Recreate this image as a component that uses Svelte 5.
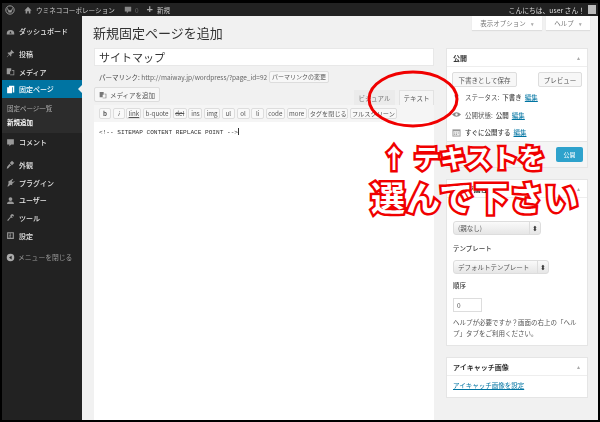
<script>
  const menuA = [['ダッシュボード', 'dash']];
  const menuB = [['投稿', 'pin'], ['メディア', 'media']];
  const menuC = [['外観', 'brush'], ['プラグイン', 'plug'], ['ユーザー', 'user'], ['ツール', 'tool'], ['設定', 'set']];
  const tools = [['b',12],['i',12],['link',15],['b-quote',28],['del',14],['ins',14],['img',16],['ul',13],['ol',13],['li',13],['code',19],['more',20],['タグを閉じる',40],['フルスクリーン',47]];
</script>

{#snippet icon(kind)}
  <svg class="ic" viewBox="0 0 12 12" aria-hidden="true">
    {#if kind === 'dash'}
      <path d="M1 9a5 5 0 0 1 10 0v1H1z M6 5.500 7.500 8.500H4.500z" fill-rule="evenodd" />
    {:else if kind === 'pin'}
      <path d="M7 1l4 4-1 .6-1-.4-2 2 .2 2L6.400 10 4.300 7.700 1.500 11 1 10.500 4 7.400 2 5.400l.8-.8 2 .2 2-2-.4-1z" />
    {:else if kind === 'media'}
      <path d="M1 1.500h6v4H5.500v4H1zM8 4h3v7H5.500v-1H10V5H8z" />
    {:else if kind === 'page'}
      <path d="M4 1h7v9H9V3H4zM1.500 3H8v8H1.500z" />
    {:else if kind === 'comment'}
      <path d="M1.500 1.500h9v7H7L4.500 11V8.500h-3z" />
    {:else if kind === 'brush'}
      <path d="M5 4l3-3 3 3-3 3zM4.500 5L7 7.500 5.500 8 3 11 1 11.500 1.500 9 4 6z" />
    {:else if kind === 'plug'}
      <path d="M6 3l3-2 .6.800L7.500 4 9 5.500 11 4l.5.700L8 8 8.500 9.500 6 9 2.500 11.500 2 11l1.500-4L3 4.500z" />
    {:else if kind === 'user'}
      <path d="M6 1.500a2.200 2.200 0 1 1 0 5 2.200 2.200 0 0 1 0-5zM1.500 10.500V9l2.500-1.800h4L10.500 9v1.500z" />
    {:else if kind === 'tool'}
      <path d="M7.500 1.500a3 3 0 0 1 3 3.500L9 3.800 7.800 5l1.300 1.400A3 3 0 0 1 6.400 6L2.800 10.800 1.500 9.500 5.800 5a3 3 0 0 1 1.700-3.500z" />
    {:else if kind === 'set'}
      <path d="M1.500 1.500h9v9h-9zM3 3v6h2V7H4V6h1V3zm3 0v2h1v1H6v3h3V3z" fill-rule="evenodd" />
    {:else if kind === 'close'}
      <path d="M6 1a5 5 0 1 1 0 10A5 5 0 0 1 6 1zM7.500 3.500 4 6l3.500 2.500z" fill-rule="evenodd" />
    {/if}
  </svg>
{/snippet}

<div class="frame">
  <header class="adminbar">
    <svg class="wp" viewBox="0 0 12 12"><circle cx="6" cy="6" r="5" fill="none" stroke="#9a9a9a" stroke-width="1.200"/><path d="M3 4l2 5 1-3 1 3 2-5" fill="none" stroke="#9a9a9a" stroke-width="1.200"/></svg>
    <svg class="home" viewBox="0 0 10 10"><path d="M5 1 9.500 5.500H8V9.500H6V6.500H4V9.500H2V5.500H.5z" fill="#999"/></svg>
    <span class="site">ウミネココーポレーション</span>
    <svg class="bub" viewBox="0 0 10 10"><path d="M1 1h8v6H5.500L3.500 9.500V7H1z" fill="#888"/></svg>
    <span class="count">0</span>
    <span class="plus">+</span>
    <span class="new">新規</span>
    <span class="hello">こんにちは、user さん！</span>
    <span class="avatar"></span>
  </header>

  <div class="body">
    <nav class="side">
      {#each menuA as m}<div class="mi first">{@render icon(m[1])}<span>{m[0]}</span></div>{/each}
      <div class="gap"></div>
      {#each menuB as m}<div class="mi">{@render icon(m[1])}<span>{m[0]}</span></div>{/each}
      <div class="mi active">{@render icon('page')}<span>固定ページ</span><i class="notch"></i></div>
      <div class="sub">
        <div class="s1">固定ページ一覧</div>
        <div class="s2">新規追加</div>
      </div>
      <div class="mi">{@render icon('comment')}<span>コメント</span></div>
      <div class="gap"></div>
      {#each menuC as m}<div class="mi">{@render icon(m[1])}<span>{m[0]}</span></div>{/each}
      <div class="mi close">{@render icon('close')}<span>メニューを閉じる</span></div>
    </nav>

    <main class="main">
      <div class="tabsTop">
        <span class="topTab t1">表示オプション <b>▾</b></span>
        <span class="topTab t2">ヘルプ <b>▾</b></span>
      </div>
      <div class="cols">
        <section class="editor">
          <h1>新規固定ページを追加</h1>
          <div class="title">サイトマップ</div>
          <div class="perma">
            <span><strong>パーマリンク:</strong> http://maiway.jp/wordpress/?page_id=92</span>
            <span class="btn pbtn">パーマリンクの変更</span>
          </div>
          <div class="mediaRow">
            <span class="btn mediaBtn"><svg class="mic" viewBox="0 0 12 12"><path d="M1 1.500h6v4H5.500v4H1zM8 4h3v7H5.500v-1H10V5H8z" fill="#777"/></svg>メディアを追加</span>
            <div class="tabs">
              <span class="tab vis">ビジュアル</span>
              <span class="tab txt">テキスト</span>
            </div>
          </div>
          <div class="toolbar">
            {#each tools as t}
              <span class="tb" class:u={t[0]==='link'} class:s={t[0]==='del'} class:em={t[0]==='i'} class:bd={t[0]==='b'} style:width="{t[1]}px">{t[0]}</span>
            {/each}
          </div>
          <div class="area">&lt;!-- SITEMAP CONTENT REPLACE POINT --&gt;<span class="caret"></span></div>
        </section>

        <aside class="rail">
          <div class="box pub">
            <div class="bh"><strong>公開</strong><b class="arr">▴</b></div>
            <div class="pbody">
              <div class="acts"><span class="btn sm b1">下書きとして保存</span><span class="btn sm b2">プレビュー</span></div>
              <div class="row r1"><svg class="ric" viewBox="0 0 10 10"><circle cx="5" cy="3" r="2.200" fill="#888"/><path d="M4.300 5h1.400v5H4.300z" fill="#888"/></svg>ステータス: <strong>下書き</strong> <a>編集</a></div>
              <div class="row"><svg class="ric" viewBox="0 0 10 10"><path d="M0 5q5-5 10 0-5 5-10 0z" fill="#888"/><circle cx="5" cy="5" r="1.300" fill="#f5f5f5"/></svg>公開状態: <strong>公開</strong> <a>編集</a></div>
              <div class="row"><svg class="ric" viewBox="0 0 10 10"><path d="M.5 1.500h9v8h-9z" fill="#999"/><path d="M1.500 3.500h7v5h-7z" fill="#eee"/><path d="M2.500 5h1v1h-1zm2 0h1v1h-1zm2 0h1v1h-1zm-4 1.800h1v1h-1zm2 0h1v1h-1z" fill="#999"/></svg><strong>すぐに公開する</strong> <a>編集</a></div>
            </div>
            <div class="foot"><span class="pubBtn">公開</span></div>
          </div>

          <div class="box attr">
            <div class="bh"><strong>ページ属性</strong><b class="arr">▴</b></div>
            <div class="abody">
              <div class="sel s-a"><span>(親なし)</span><em>⬍</em></div>
              <div class="lab l1">テンプレート</div>
              <div class="sel s-b"><span>デフォルトテンプレート</span><em>⬍</em></div>
              <div class="lab l2">順序</div>
              <div class="num">0</div>
              <p>ヘルプが必要ですか？画面の右上の「ヘルプ」タブをご利用ください。</p>
            </div>
          </div>

          <div class="box eye">
            <div class="bh"><strong>アイキャッチ画像</strong><b class="arr">▴</b></div>
            <div class="ebody"><a>アイキャッチ画像を設定</a></div>
          </div>
        </aside>
      </div>
    </main>
  </div>

  <svg class="ring" viewBox="0 0 600 422" aria-hidden="true">
    <ellipse cx="413" cy="99" rx="44" ry="27" fill="none" stroke="#f00000" stroke-width="3"/>
  </svg>
  <div class="note n1">↑ テキストを</div>
  <div class="note n2">選んで下さい</div>
</div>

<style>
  :global(body) { margin: 0; background: #000; }
  .frame {
    position: relative; width: 600px; height: 422px; box-sizing: border-box; overflow: hidden;
    padding: 3px 2px 2px; background: #000; display: flex; flex-direction: column;
    font-family: "Noto Sans CJK JP", "Liberation Sans", sans-serif; color: #444; font-size: 7px;
  }
  .adminbar { height: 13px; background: #222; display: flex; align-items: center; color: #ccc; font-size: 6.500px; flex: none; filter: blur(.25px); }
  .wp { width: 10px; height: 10px; margin-left: 3px; }
  .home { width: 8px; height: 8px; margin-left: 9px; }
  .site { margin-left: 4px; width: 80px; white-space: nowrap; font-size: 6.600px; }
  .bub { width: 8px; height: 8px; margin-left: 8px; }
  .count { color: #666; margin-left: 3px; }
  .plus { margin-left: 8px; font: bold 11px/1 "Liberation Sans", sans-serif; color: #aaa; }
  .new { margin-left: 4px; }
  .hello { margin-left: auto; font-size: 6.800px; color: #ddd; white-space: nowrap; }
  .avatar { width: 8px; height: 9px; background: #bbb; margin: 0 2px 0 3px; }

  .body { flex: 1; display: flex; min-height: 0; filter: blur(.25px); }
  .side { width: 80px; flex: none; background: #222; padding-top: 6px; box-sizing: border-box; }
  .mi { height: 17.700px; display: flex; align-items: center; color: #e6e6e6; font-size: 7px; font-weight: 500; position: relative; white-space: nowrap; }
  .mi .ic { width: 9px; height: 9px; margin: 0 4px 0 4px; fill: #999; flex: none; }
  .mi.first { height: 18px; }
  .gap { height: 5px; }
  .active { background: #0074a2; color: #fff; height: 18px; }
  .active .ic { fill: #fff; }
  .notch { position: absolute; right: 0; top: 5px; border: 4px solid transparent; border-right-color: #f1f1f1; border-left: 0; }
  .sub { background: #2c2c2c; height: 35px; padding-top: 4px; box-sizing: border-box; font-size: 6.500px; line-height: 13.500px; padding-left: 5px; }
  .s1 { color: #aaa; }
  .s2 { color: #fff; font-weight: 700; }
  .mi.close { margin-top: 4px; color: #999; font-weight: 400; font-size: 6.800px; }
  .mi.close .ic { margin-right: 3px; fill: #aaa; }

  .main { flex: 1; background: #f1f1f1; min-width: 0; display: flex; flex-direction: column; }
  .tabsTop { height: 0; display: flex; justify-content: flex-end; gap: 4px; padding-right: 8px; flex: none; }
  .topTab { height: 14px; background: #fff; color: #777; font-size: 6.500px; display: flex; align-items: center; justify-content: center; gap: 5px; box-shadow: 0 1px 1px rgba(0,0,0,.08); }
  .topTab b { font-size: 5px; color: #aaa; }
  .t1 { width: 70px; }
  .t2 { width: 44px; }
  .cols { flex: 1; display: flex; min-height: 0; padding-left: 12px; gap: 12px; }

  .editor { width: 340px; flex: none; display: flex; flex-direction: column; min-height: 0; }
  h1 { margin: 0 0 0 -1px; height: 32px; font-size: 13px; line-height: 33px; font-weight: 400; color: #333; white-space: nowrap; }
  .title { height: 18px; background: #fff; border: 1px solid #e8e8e8; box-sizing: border-box; font-size: 11px; line-height: 16px; padding-left: 4px; color: #333; flex: none; }
  .perma { height: 21px; display: flex; align-items: center; font-size: 6.500px; padding-left: 5px; color: #666; flex: none; white-space: nowrap; }
  .perma strong { font-weight: 400; color: #444; }
  .btn { background: #f7f7f7; border: 1px solid #ddd; border-radius: 2px; box-sizing: border-box; color: #555; display: inline-flex; align-items: center; justify-content: center; white-space: nowrap; }
  .pbtn { width: 60px; height: 12px; font-size: 6px; margin-left: 2px; }
  .mediaRow { height: 18px; display: flex; justify-content: space-between; flex: none; }
  .mediaBtn { width: 66px; height: 15px; font-size: 6.500px; gap: 3px; }
  .mic { width: 8px; height: 8px; }
  .tabs { display: flex; align-items: flex-end; gap: 4px; }
  .tab { font-size: 6.500px; height: 15px; display: flex; align-items: center; justify-content: center; color: #777; box-sizing: border-box; }
  .vis { width: 41px; background: #ebebeb; }
  .txt { width: 35px; background: #f5f5f5; color: #555; height: 15px; border: 1px solid #e2e2e2; border-bottom: 0; }
  .toolbar { height: 17px; background: #f5f5f5; display: flex; align-items: center; gap: 1.700px; padding-left: 5px; box-sizing: border-box; flex: none; }
  .tb { height: 11px; background: #f9f9f9; border: 1px solid #ddd; border-radius: 2px; line-height: 9px; color: #555; text-align: center; white-space: nowrap; box-sizing: border-box; flex: none; font-size: 6.200px; }
  .u { text-decoration: underline; }
  .s { text-decoration: line-through; }
  .em { font-style: italic; }
  .bd { font-weight: 700; }
  .area { flex: 1; background: #fff; font: 6.100px/1 "Liberation Mono", monospace; color: #333; padding: 6px 5px; box-sizing: border-box; display: block; white-space: nowrap; }
  .caret { display: inline-block; width: 1px; height: 7px; background: #333; vertical-align: -1px; }

  .rail { width: 142px; flex: none; padding-top: 32px; }
  .box { background: #fff; border: 1px solid #e5e5e5; box-sizing: border-box; margin-bottom: 11px; }
  .bh { height: 18px; border-bottom: 1px solid #eee; box-sizing: border-box; display: flex; align-items: center; justify-content: space-between; padding: 0 7px 0 6px; font-size: 7px; color: #333; }
  .arr { font-size: 6px; color: #aaa; font-weight: 400; }
  .pbody { height: 74px; padding: 5px 5px 0; box-sizing: border-box; font-size: 6.500px; color: #555; }
  .acts { display: flex; justify-content: space-between; height: 15px; margin-bottom: 1.500px; }
  .sm { height: 15px; font-size: 6.500px; }
  .b1 { width: 65px; }
  .b2 { width: 44px; }
  .row { height: 17.500px; display: flex; align-items: center; gap: 3px; white-space: nowrap; }
  .row strong { font-weight: 500; color: #444; }
  a { color: #0074a2; text-decoration: underline; }
  .ric { width: 9px; height: 9px; margin-right: 1px; }
  .foot { height: 26px; background: #f5f5f5; border-top: 1px solid #e5e5e5; box-sizing: border-box; display: flex; align-items: center; justify-content: flex-end; padding-right: 4px; }
  .pubBtn { width: 27px; height: 15px; background: #2ea2cc; border-radius: 2px; color: #fff; font-size: 6px; display: flex; align-items: center; justify-content: center; }

  .attr { height: 167px; }
  .abody { padding: 23px 6px 0; font-size: 6.500px; color: #444; }
  .sel { height: 14px; border-radius: 3px; background: linear-gradient(#fafafa, #e6e6e6); border: 1px solid #ddd; box-sizing: border-box; display: flex; align-items: center; justify-content: space-between; padding-left: 4px; font-size: 6.500px; white-space: nowrap; color: #555; }
  .sel em { font-style: normal; font-size: 7px; color: #333; border-left: 1px solid #ddd; padding: 0 2px; line-height: 12px; }
  .s-a { width: 88px; }
  .s-b { width: 96px; }
  .lab { font-weight: 500; color: #444; line-height: 10px; }
  .l1 { margin: 8px 0 7px; }
  .l2 { margin: 6px 0 8px; }
  .num { width: 29px; height: 14px; border: 1px solid #ddd; background: #fff; box-sizing: border-box; font-size: 6.500px; padding-left: 3px; line-height: 12px; color: #555; }
  p { margin: 5px 0 0; font-size: 6.500px; line-height: 11px; color: #555; width: 126px; }
  .eye { height: 41px; }
  .ebody { padding: 3px 6px; font-size: 6.500px; line-height: 12px; }

  .ring { position: absolute; inset: 0; width: 600px; height: 422px; pointer-events: none; }
  .note {
    position: absolute; white-space: nowrap; color: #fff; font-weight: 700; line-height: 1;
    -webkit-text-stroke: 5px #f00000; paint-order: stroke fill;
    font-family: "Noto Sans CJK JP", sans-serif;
  }
  .n1 { left: 381px; top: 144px; font-size: 26px; letter-spacing: .4px; }
  .n2 { left: 371px; top: 180px; font-size: 34px; letter-spacing: 1px; }
</style>
